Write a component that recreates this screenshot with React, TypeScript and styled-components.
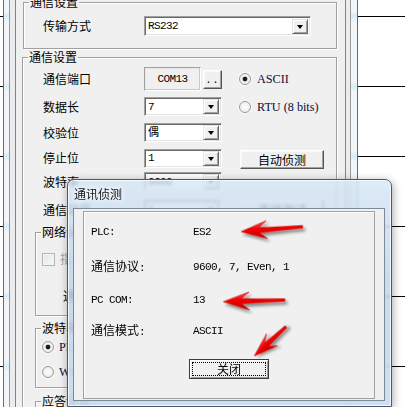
import React from "react";
import styled, { createGlobalStyle } from "styled-components";

const Global = createGlobalStyle`
  html, body { margin: 0; padding: 0; background: #fff; }
  body {
    font-family: "Noto Sans CJK SC", "Liberation Sans", sans-serif;
    font-size: 12px;
    color: #000;
  }
  #root { width: 405px; height: 407px; }
`;

const CJK = `"Noto Sans CJK SC", "Liberation Sans", sans-serif`;
const MONO = `"Liberation Mono", "Noto Sans CJK SC", monospace`;

const Desktop = styled.div`
  position: relative;
  width: 405px;
  height: 407px;
  overflow: hidden;
  background: repeating-linear-gradient(
    to bottom,
    #fff 0px,
    #fff 16px,
    #000 16px,
    #000 17px,
    #fff 17px,
    #fff 70px
  );
`;

const WinOuter = styled.div`
  box-sizing: border-box;
  margin-left: 3px;
  width: 355px;
  height: 100%;
  display: flex;
  border-left: 1px solid #6a6a6a;
  border-right: 1px solid #6a6a6a;
  padding: 0 6px 0 5px;
  background: repeating-linear-gradient(
    to bottom,
    #f3f6f9 0px,
    #f3f6f9 11px,
    #d3ecfa 16px,
    #f3f6f9 22px,
    #f3f6f9 70px
  );
`;

const WinMid = styled.div`
  flex: 1;
  display: flex;
  border-left: 1px solid #9a9a9a;
  border-right: 1px solid #9a9a9a;
  padding: 0 4px 0 5px;
  background: #ececec;
`;

const Panel = styled.div`
  flex: 1;
  min-width: 0;
  display: flex;
  flex-direction: column;
  overflow: hidden;
  border-left: 1px solid #838383;
  border-right: 1px solid #838383;
  background: #f0f0f0;
`;

const Group = styled.fieldset<{ $ml: number; $mt?: number; $mr?: number }>`
  box-sizing: border-box;
  margin: ${(p) => p.$mt ?? 0}px ${(p) => p.$mr ?? 8}px 0 ${(p) => p.$ml}px;
  padding: 0;
  min-width: 0;
  border: 1px solid #a0a0a0;
  box-shadow: inset 1px 1px 0 #fff, 1px 1px 0 #fff;
  flex-shrink: 0;
`;

const Legend = styled.legend`
  margin-left: 5px;
  padding: 0 1px;
  font-family: ${CJK};
  font-size: 12px;
  line-height: 14px;
  background: #f0f0f0;
`;

const GroupBody = styled.div<{ $pt: number; $pb: number; $pl: number }>`
  display: flex;
  flex-direction: column;
  padding: ${(p) => p.$pt}px 0 ${(p) => p.$pb}px ${(p) => p.$pl}px;
`;

const FormRow = styled.div<{ $mt: number; $h: number }>`
  display: grid;
  grid-template-columns: 101px 78px auto;
  align-items: center;
  height: ${(p) => p.$h}px;
  margin-top: ${(p) => p.$mt}px;
  padding-left: 8px;
`;

const WideRow = styled.div`
  display: grid;
  grid-template-columns: 101px 167px;
  align-items: center;
  height: 20px;
`;

const Label = styled.span<{ $disabled?: boolean }>`
  font-family: ${CJK};
  font-size: 12px;
  line-height: 14px;
  white-space: nowrap;
  color: ${(p) => (p.$disabled ? "#a0a0a0" : "#000")};
`;

const Combo = styled.div<{ $h: number }>`
  box-sizing: border-box;
  height: ${(p) => p.$h}px;
  display: flex;
  align-items: center;
  background: #fff;
  border: 1px solid;
  border-color: #a0a0a0 #fff #fff #a0a0a0;
  box-shadow: inset 1px 1px 0 #696969, inset -1px -1px 0 #e3e3e3;
  padding: 1px 2px 1px 3px;
`;

const ComboText = styled.span`
  flex: 1;
  font-family: ${MONO};
  font-size: 11px;
  letter-spacing: -0.6px;
  line-height: 12px;
  white-space: nowrap;
`;

const DropButton = styled.span`
  box-sizing: border-box;
  width: 16px;
  height: 15px;
  display: flex;
  align-items: center;
  justify-content: center;
  background: #f0f0f0;
  border: 1px solid;
  border-color: #e3e3e3 #696969 #696969 #e3e3e3;
  box-shadow: inset 1px 1px 0 #fff, inset -1px -1px 0 #a0a0a0;
`;

const DropArrow = styled.span`
  width: 0;
  height: 0;
  margin-top: 1px;
  border-left: 3.5px solid transparent;
  border-right: 3.5px solid transparent;
  border-top: 4px solid #000;
`;

const PortCell = styled.div`
  display: flex;
  align-items: center;
  gap: 2px;
`;

const PortBox = styled.div`
  box-sizing: border-box;
  width: 57px;
  height: 24px;
  display: flex;
  align-items: center;
  justify-content: center;
  border: 1px solid;
  border-color: #a0a0a0 #fff #fff #a0a0a0;
  box-shadow: inset -1px -1px 0 #c8c8c8, inset 1px 1px 0 #e8e8e8;
  font-family: ${MONO};
  font-size: 11px;
  letter-spacing: -0.6px;
  background: #f0f0f0;
`;

const RaisedButton = styled.div<{ $w: number; $h: number; $ml?: number; $mt?: number }>`
  box-sizing: border-box;
  width: ${(p) => p.$w}px;
  height: ${(p) => p.$h}px;
  margin-left: ${(p) => p.$ml ?? 0}px;
  margin-top: ${(p) => p.$mt ?? 0}px;
  display: flex;
  align-items: center;
  justify-content: center;
  background: #f0f0f0;
  border: 1px solid;
  border-color: #fff #555 #555 #fff;
  box-shadow: inset -1px -1px 0 #a0a0a0, inset 1px 1px 0 #f8f8f8;
  font-family: ${CJK};
  font-size: 12px;
  line-height: 14px;
`;

const Dots = styled.span`
  font-family: ${MONO};
  font-size: 10px;
  line-height: 10px;
  margin-top: 4px;
  letter-spacing: 1px;
`;

const RadioLine = styled.div`
  display: flex;
  align-items: center;
  gap: 6px;
  margin-left: 17px;
`;

const RadioCircle = styled.span<{ $on?: boolean }>`
  box-sizing: border-box;
  flex-shrink: 0;
  width: 12px;
  height: 12px;
  border-radius: 50%;
  border: 1px solid #9a9a9a;
  box-shadow: 0 0 0 1px #f8f8f8;
  background: ${(p) =>
    p.$on
      ? "radial-gradient(circle, #1c1c1c 0px, #1c1c1c 2px, #ececec 2.7px, #fafafa 100%)"
      : "radial-gradient(circle, #fdfdfd 0px, #e8e8e8 100%)"};
`;

const SerifText = styled.span`
  font-family: "Liberation Serif", serif;
  font-size: 12.2px;
  line-height: 14px;
  color: #0c0c3a;
  white-space: nowrap;
`;

const SubBody = styled.div<{ $pt: number; $pb: number }>`
  display: flex;
  flex-direction: column;
  padding: ${(p) => p.$pt}px 0 ${(p) => p.$pb}px 6px;
`;

const OptionRow = styled.div<{ $mt: number; $pl?: number }>`
  display: flex;
  align-items: center;
  gap: 5px;
  height: 16px;
  margin-top: ${(p) => p.$mt}px;
  padding-left: ${(p) => p.$pl ?? 0}px;
`;

const CheckBox = styled.span`
  box-sizing: border-box;
  width: 13px;
  height: 13px;
  border: 1px solid #b4b4b4;
  background: linear-gradient(135deg, #e6e6e6, #f8f8f8);
  box-shadow: inset 0 0 0 1px #f4f4f4;
`;

/* ---------- dialog ---------- */

const Dialog = styled.div`
  position: absolute;
  left: 67px;
  top: 179px;
  width: 325px;
  height: 228px;
  box-sizing: border-box;
  display: flex;
  flex-direction: column;
  padding: 0 6px 5px 5px;
  border: 1px solid #4d5864;
  border-radius: 7px 7px 0 0;
  background: linear-gradient(
    180deg,
    rgba(214, 230, 246, 0.8) 0%,
    rgba(188, 212, 236, 0.82) 45%,
    rgba(200, 220, 241, 0.9) 100%
  );
  backdrop-filter: blur(1.6px);
  box-shadow: inset 0 0 0 1px rgba(255, 255, 255, 0.75),
    1px 2px 9px rgba(0, 0, 0, 0.35);
`;

const TitleBar = styled.div`
  height: 28px;
  display: flex;
  align-items: center;
  padding-left: 1px;
`;

const TitleText = styled.span`
  font-family: ${CJK};
  font-size: 12px;
  line-height: 14px;
  color: #111;
  text-shadow: 0 0 6px #fff, 0 0 3px #fff;
`;

const Client = styled.div`
  flex: 1;
  display: flex;
  flex-direction: column;
  padding: 2px 9px 1px 9px;
  background: #f0f0f0;
  border: 1px solid #7c8a98;
`;

const InfoPanel = styled.div`
  flex: 1;
  display: flex;
  flex-direction: column;
  padding-left: 7px;
  border: 1px solid #a0a0a0;
  box-shadow: inset 1px 1px 0 #fff;
`;

const InfoGrid = styled.div`
  display: grid;
  grid-template-columns: 102px 1fr;
  grid-template-rows: 36px 34px 32px 30px;
  align-items: center;
  padding-top: 2px;
`;

const InfoText = styled.span`
  font-family: ${MONO};
  font-size: 11px;
  letter-spacing: -0.6px;
  line-height: 14px;
  white-space: pre;
`;

const Cjk = styled.span`
  font-family: ${CJK};
  font-size: 12px;
  letter-spacing: 0;
`;

const ButtonRow = styled.div`
  display: flex;
  margin-top: 13px;
  padding-left: 98px;
`;

const DefaultButton = styled.div`
  box-sizing: border-box;
  width: 80px;
  height: 20px;
  padding: 2px;
  display: flex;
  background: #f0f0f0;
  border: 1px solid #3c3c3c;
  box-shadow: inset 1px 1px 0 #fff, inset -1px -1px 0 #9a9a9a;
`;

const FocusRing = styled.div`
  flex: 1;
  display: flex;
  align-items: center;
  justify-content: center;
  border: 1px dotted #000;
  font-family: ${CJK};
  font-size: 12px;
  line-height: 12px;
`;

const Overlay = styled.svg`
  position: absolute;
  left: 0;
  top: 0;
  pointer-events: none;
`;

type Pt = [number, number];

function Arrow({ tip, tail, head = 26, w = 9 }: { tip: Pt; tail: Pt; head?: number; w?: number }) {
  const dx = tail[0] - tip[0];
  const dy = tail[1] - tip[1];
  const len = Math.hypot(dx, dy);
  const ang = (Math.atan2(dy, dx) * 180) / Math.PI;
  const n = head * 0.7;
  const pts = [
    [0, 0],
    [head, -w],
    [n, -2.4],
    [len, -1.3],
    [len, 1.3],
    [n, 2.4],
    [head, w],
  ]
    .map((p) => p.join(","))
    .join(" ");
  return (
    <polygon
      points={pts}
      transform={`translate(${tip[0]} ${tip[1]}) rotate(${ang})`}
      fill="url(#redFill)"
      stroke="#c40000"
      strokeWidth={0.5}
      strokeLinejoin="round"
      filter="url(#arrowShadow)"
    />
  );
}

export default function App() {
  return (
    <>
      <Global />
      <Desktop>
        <WinOuter>
          <WinMid>
            <Panel>
              <Group $ml={7} $mt={-5}>
                <Legend>通信设置</Legend>
                <GroupBody $pt={7} $pb={12} $pl={19}>
                  <WideRow>
                    <Label>传输方式</Label>
                    <Combo $h={20}>
                      <ComboText>RS232</ComboText>
                      <DropButton>
                        <DropArrow />
                      </DropButton>
                    </Combo>
                  </WideRow>
                </GroupBody>
              </Group>

              <Group $ml={6} $mt={1}>
                <Legend>通信设置</Legend>
                <GroupBody $pt={0} $pb={0} $pl={12}>
                  <FormRow $mt={3} $h={24}>
                    <Label>通信端口</Label>
                    <PortCell>
                      <PortBox>COM13</PortBox>
                      <RaisedButton $w={19} $h={19}>
                        <Dots>..</Dots>
                      </RaisedButton>
                    </PortCell>
                    <RadioLine>
                      <RadioCircle $on />
                      <SerifText>ASCII</SerifText>
                    </RadioLine>
                  </FormRow>
                  <FormRow $mt={6} $h={19}>
                    <Label>数据长</Label>
                    <Combo $h={19}>
                      <ComboText>7</ComboText>
                      <DropButton>
                        <DropArrow />
                      </DropButton>
                    </Combo>
                    <RadioLine>
                      <RadioCircle />
                      <SerifText>RTU (8 bits)</SerifText>
                    </RadioLine>
                  </FormRow>
                  <FormRow $mt={7} $h={19}>
                    <Label>校验位</Label>
                    <Combo $h={19}>
                      <ComboText>偶</ComboText>
                      <DropButton>
                        <DropArrow />
                      </DropButton>
                    </Combo>
                  </FormRow>
                  <FormRow $mt={5} $h={19}>
                    <Label>停止位</Label>
                    <Combo $h={19}>
                      <ComboText>1</ComboText>
                      <DropButton>
                        <DropArrow />
                      </DropButton>
                    </Combo>
                    <RaisedButton $w={84} $h={19} $ml={18} $mt={3}>
                      自动侦测
                    </RaisedButton>
                  </FormRow>
                  <FormRow $mt={6} $h={19}>
                    <Label>波特率</Label>
                    <Combo $h={19}>
                      <ComboText>9600</ComboText>
                      <DropButton>
                        <DropArrow />
                      </DropButton>
                    </Combo>
                  </FormRow>
                  <FormRow $mt={9} $h={19}>
                    <Label>通信站号</Label>
                    <Combo $h={19}>
                      <ComboText>1</ComboText>
                      <DropButton>
                        <DropArrow />
                      </DropButton>
                    </Combo>
                    <RaisedButton $w={84} $h={19} $ml={18}>
                      连线测试
                    </RaisedButton>
                  </FormRow>

                  <Group $ml={0} $mr={12} $mt={6}>
                    <Legend>网络设置</Legend>
                    <SubBody $pt={12} $pb={11}>
                      <OptionRow $mt={0}>
                        <CheckBox />
                        <Label $disabled>指定IP地址</Label>
                      </OptionRow>
                      <OptionRow $mt={21} $pl={21}>
                        <Label>通讯地址</Label>
                      </OptionRow>
                    </SubBody>
                  </Group>

                  <Group $ml={0} $mr={12} $mt={5}>
                    <Legend>波特率设置</Legend>
                    <SubBody $pt={4} $pb={7}>
                      <OptionRow $mt={0}>
                        <RadioCircle $on />
                        <SerifText>PLC</SerifText>
                      </OptionRow>
                      <OptionRow $mt={9}>
                        <RadioCircle />
                        <SerifText>WPL</SerifText>
                      </OptionRow>
                    </SubBody>
                  </Group>

                  <Group $ml={0} $mr={12} $mt={6}>
                    <Legend>应答设置</Legend>
                    <SubBody $pt={20} $pb={10}>
                      <OptionRow $mt={0}>
                        <Label>超时</Label>
                      </OptionRow>
                    </SubBody>
                  </Group>
                </GroupBody>
              </Group>
            </Panel>
          </WinMid>
        </WinOuter>

        <Dialog>
          <TitleBar>
            <TitleText>通讯侦测</TitleText>
          </TitleBar>
          <Client>
            <InfoPanel>
              <InfoGrid>
                <InfoText>PLC:</InfoText>
                <InfoText>ES2</InfoText>
                <InfoText>
                  <Cjk>通信协议</Cjk>:
                </InfoText>
                <InfoText>9600, 7, Even, 1</InfoText>
                <InfoText>PC COM:</InfoText>
                <InfoText>13</InfoText>
                <InfoText>
                  <Cjk>通信模式</Cjk>:
                </InfoText>
                <InfoText>ASCII</InfoText>
              </InfoGrid>
              <ButtonRow>
                <DefaultButton>
                  <FocusRing>关闭</FocusRing>
                </DefaultButton>
              </ButtonRow>
            </InfoPanel>
          </Client>
        </Dialog>

        <Overlay width={405} height={407} viewBox="0 0 405 407">
          <defs>
            <linearGradient id="redFill" x1="0" y1="0" x2="0" y2="1">
              <stop offset="0" stopColor="#ff4a4a" />
              <stop offset="0.45" stopColor="#f00000" />
              <stop offset="1" stopColor="#c20000" />
            </linearGradient>
            <filter id="arrowShadow" x="-30%" y="-60%" width="160%" height="220%">
              <feDropShadow dx="2" dy="3" stdDeviation="1.6" floodColor="#000" floodOpacity="0.45" />
            </filter>
          </defs>
          <Arrow tip={[241, 231.7]} tail={[302.7, 226.7]} />
          <Arrow tip={[223.3, 301.7]} tail={[285, 300]} />
          <Arrow tip={[254.3, 356]} tail={[286, 326.7]} head={24} w={8} />
        </Overlay>
      </Desktop>
    </>
  );
}
